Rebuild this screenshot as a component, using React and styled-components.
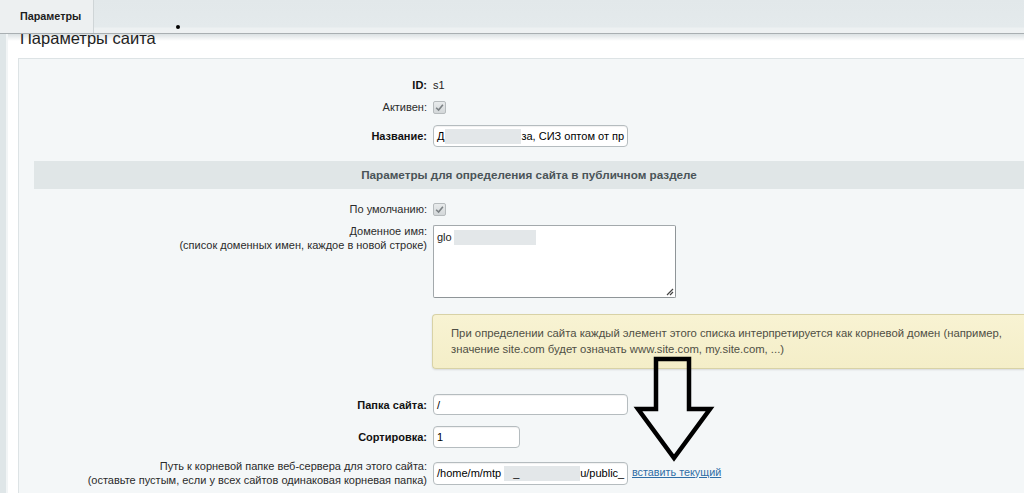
import React from 'react'
import styled, { createGlobalStyle } from 'styled-components'

const GlobalStyle = createGlobalStyle`
  html, body {
    margin: 0;
    padding: 0;
    background: #fff;
    overflow: hidden;
  }
  body {
    font-family: "Liberation Sans", Arial, sans-serif;
    font-size: 11px;
    color: #000;
  }
`

const TabBar = styled.div`
  position: relative;
  display: flex;
  height: 33px;
  background: linear-gradient(#e2e8ea 0, #e4eaec 27px, #edf1f2 28px, #eef1f2 33px);
  border-bottom: 1px solid #a9afb2;
`

const Tab = styled.div`
  width: 73px;
  padding-left: 20px;
  display: flex;
  align-items: center;
  padding-bottom: 1px;
  background: #edf0f1;
  border-right: 1px solid #cfd5d7;
  font-weight: bold;
  font-size: 10.8px;
  color: #1d1d1d;
`

const Dot = styled.span`
  position: absolute;
  left: 176px;
  top: 25px;
  width: 4px;
  height: 4px;
  border-radius: 50%;
  background: #000;
`

const Body = styled.div`
  display: flex;
`

const Strip = styled.div`
  width: 6px;
  background: #dfe6e8;
  border-right: 2px solid #f2f5f6;
  flex-shrink: 0;
`

const Content = styled.div`
  flex: 1;
  min-width: 0;
`

const TitleArea = styled.div`
  height: 24px;
  overflow: hidden;
  padding-left: 12px;
  background: linear-gradient(#dbe1e3, #fff 7px);
`

const Title = styled.h1`
  margin: -6px 0 0;
  font-size: 16.5px;
  line-height: 20px;
  font-weight: normal;
  color: #1e1e1e;
`

const Panel = styled.div`
  position: relative;
  margin-left: 10px;
  margin-right: -20px;
  padding: 16px 0 40px;
  background: #f4f7f8;
  border-top: 1px solid #dde3e5;
  border-left: 1px solid #dde3e5;
`

const Row = styled.div`
  display: flex;
  align-items: ${p => (p.$top ? 'flex-start' : 'center')};
  gap: 6px;
  min-height: ${p => p.$h || 20}px;
  margin-top: ${p => p.$mt || 0}px;
`

const Label = styled.div`
  width: 408px;
  flex-shrink: 0;
  text-align: right;
  line-height: 14px;
  font-weight: ${p => (p.$bold ? 'bold' : 'normal')};
  color: ${p => (p.$bold ? '#111' : '#2b2b2b')};
  margin-top: ${p => p.$mt || 0}px;
`

const Value = styled.span`
  font-size: 11px;
  color: #222;
`

const Check = styled.span`
  width: 13px;
  height: 13px;
  box-sizing: border-box;
  border: 1px solid #b6bbbd;
  border-radius: 2px;
  background: linear-gradient(#e8ebec, #d3d7d9);
  display: flex;
  align-items: center;
  justify-content: center;
`

const Field = styled.div`
  width: ${p => p.$w}px;
  height: ${p => p.$h || 22}px;
  box-sizing: border-box;
  padding: 0 3px;
  display: flex;
  align-items: center;
  background: #fff;
  border: 1px solid #b5bcbf;
  border-radius: 4px;
  box-shadow: inset 0 1px 1px rgba(0, 0, 0, 0.06);
  font-size: 11px;
  color: #000;
  white-space: pre;
  overflow: hidden;
  flex-shrink: 0;
`

const Area = styled.div`
  position: relative;
  width: 243px;
  height: 73px;
  box-sizing: border-box;
  padding: 4px 3px;
  display: flex;
  align-items: flex-start;
  background: #fff;
  border: 1px solid #a3a9ac;
  border-right-color: #8f9598;
  border-bottom-color: #8f9598;
  border-radius: 2px;
  font-size: 11px;
  line-height: 15px;
  color: #222;
  white-space: pre;
`

const Grip = styled.svg`
  position: absolute;
  right: 1px;
  bottom: 1px;
`

const Blur = styled.span`
  display: inline-block;
  width: ${p => p.$w}px;
  height: ${p => p.$h || 15}px;
  background: #e3e7e9;
  margin-left: ${p => p.$ml || 2}px;
  font-size: 11px;
  line-height: 15px;
  white-space: pre;
  flex-shrink: 0;
`

const SectionHead = styled.div`
  margin: 14px 20px 0 15px;
  height: 28px;
  line-height: 28px;
  text-align: center;
  background: #e0e6e7;
  font-weight: bold;
  font-size: 11.7px;
  color: #4a5458;
`

const Hint = styled.div`
  flex: 1;
  margin-left: -1px;
  height: 55px;
  box-sizing: border-box;
  padding: 10px 18px 0;
  background: linear-gradient(#f8f3d3, #f4eec8);
  border: 1px solid #d8d2a6;
  border-right: none;
  border-radius: 4px 0 0 4px;
  box-shadow: 0 1px 2px rgba(0, 0, 0, 0.12);
  font-size: 11.3px;
  line-height: 16px;
  color: #4f4f45;
`

const Link = styled.a`
  color: #2f6ea6;
  text-decoration: underline;
  font-size: 10.8px;
  margin: 0 0 3px -2px;
  cursor: pointer;
`

const Arrow = styled.svg`
  position: absolute;
  left: 612px;
  top: 294px;
`

const CheckBox = () => (
  <Check>
    <svg width="9" height="9" viewBox="0 0 8 8">
      <path d="M1 4.2 L3.2 6.3 L7 1.5" fill="none" stroke="#7c8285" strokeWidth="1.4" />
    </svg>
  </Check>
)

const App = () => {
  return (
    <>
      <GlobalStyle />
      <TabBar>
        <Tab>Параметры</Tab>
        <Dot />
      </TabBar>
      <Body>
        <Strip />
        <Content>
          <TitleArea>
            <Title>Параметры сайта</Title>
          </TitleArea>
          <Panel>
            <Row $h={20}>
              <Label $bold>ID:</Label>
              <Value>s1</Value>
            </Row>
            <Row $h={20} $mt={2}>
              <Label>Активен:</Label>
              <CheckBox />
            </Row>
            <Row $h={22} $mt={8}>
              <Label $bold>Название:</Label>
              <Field $w={195}>
                Д<Blur $w={76} $ml={1} />за, СИЗ оптом от пр
              </Field>
            </Row>

            <SectionHead>Параметры для определения сайта в публичном разделе</SectionHead>

            <Row $h={20} $mt={10}>
              <Label>По умолчанию:</Label>
              <CheckBox />
            </Row>
            <Row $top $h={73} $mt={6}>
              <Label $mt={-1}>
                Доменное имя:
                <br />
                (список доменных имен, каждое в новой строке)
              </Label>
              <Area>
                glo<Blur $w={82} $ml={2} />
                <Grip width="10" height="10" viewBox="0 0 10 10">
                  <path d="M9 3 L3 9 M9 6 L6 9" stroke="#444" strokeWidth="1.2" />
                </Grip>
              </Area>
            </Row>
            <Row $h={55} $mt={16}>
              <Label />
              <Hint>
                При определении сайта каждый элемент этого списка интерпретируется как корневой домен (например,
                <br />
                значение site.com будет означать www.site.com, my.site.com, ...)
              </Hint>
            </Row>
            <Row $h={21} $mt={25}>
              <Label $bold>Папка сайта:</Label>
              <Field $w={195} $h={21}>/</Field>
            </Row>
            <Row $h={22} $mt={11}>
              <Label $bold>Сортировка:</Label>
              <Field $w={87}>1</Field>
            </Row>
            <Row $h={23} $mt={11}>
              <Label>
                Путь к корневой папке веб-сервера для этого сайта:
                <br />
                (оставьте пустым, если у всех сайтов одинаковая корневая папка)
              </Label>
              <Field $w={195} $h={23}>
                /home/m/mtp<Blur $w={76} $ml={3}>{'   _'}</Blur>u/public_
              </Field>
              <Link>вставить текущий</Link>
            </Row>

            <Arrow width="90" height="115" viewBox="0 0 90 115">
              <path
                d="M25 6 L58 6 L58 56 L79 56 L43 105 L7 56 L25 56 Z"
                fill="none"
                stroke="#000"
                strokeWidth="4.5"
                strokeLinejoin="miter"
              />
            </Arrow>
          </Panel>
        </Content>
      </Body>
    </>
  )
}

export default App
